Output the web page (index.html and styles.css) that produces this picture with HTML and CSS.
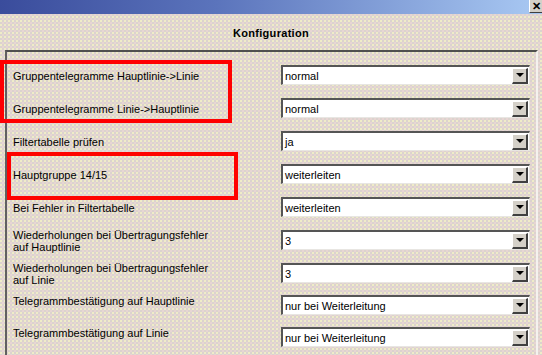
FILE: index.html
```html
<!DOCTYPE html>
<html>
<head>
<meta charset="utf-8">
<link rel="stylesheet" href="styles.css">
</head>
<body>
<div class="window">
  <div class="titlebar">
    <div class="close">&#x2715;</div>
  </div>
  <div class="heading">Konfiguration</div>
  <div class="panel">
    <div class="row">
      <div class="label">Gruppentelegramme Hauptlinie-&gt;Linie</div>
      <div class="select"><span class="value">normal</span><span class="arrow"></span></div>
    </div>
    <div class="row">
      <div class="label">Gruppentelegramme Linie-&gt;Hauptlinie</div>
      <div class="select"><span class="value">normal</span><span class="arrow"></span></div>
    </div>
    <div class="row">
      <div class="label">Filtertabelle prüfen</div>
      <div class="select"><span class="value">ja</span><span class="arrow"></span></div>
    </div>
    <div class="row">
      <div class="label">Hauptgruppe 14/15</div>
      <div class="select"><span class="value">weiterleiten</span><span class="arrow"></span></div>
    </div>
    <div class="row">
      <div class="label">Bei Fehler in Filtertabelle</div>
      <div class="select"><span class="value">weiterleiten</span><span class="arrow"></span></div>
    </div>
    <div class="row">
      <div class="label">Wiederholungen bei Übertragungsfehler<br>auf Hauptlinie</div>
      <div class="select"><span class="value">3</span><span class="arrow"></span></div>
    </div>
    <div class="row short">
      <div class="label">Wiederholungen bei Übertragungsfehler<br>auf Linie</div>
      <div class="select"><span class="value">3</span><span class="arrow"></span></div>
    </div>
    <div class="row short">
      <div class="label raised">Telegrammbestätigung auf Hauptlinie</div>
      <div class="select"><span class="value">nur bei Weiterleitung</span><span class="arrow"></span></div>
    </div>
    <div class="row short">
      <div class="label raised">Telegrammbestätigung auf Linie</div>
      <div class="select"><span class="value">nur bei Weiterleitung</span><span class="arrow"></span></div>
    </div>
  </div>
  <div class="mark mark-a"></div>
  <div class="mark mark-b"></div>
</div>
</body>
</html>
```
FILE: styles.css
```css
html, body {
  margin: 0;
  padding: 0;
}
body {
  width: 542px;
  height: 355px;
  overflow: hidden;
  font-family: "Liberation Sans", Arial, sans-serif;
  font-size: 11px;
  color: #000;
}
.window {
  position: relative;
  width: 542px;
  height: 355px;
  background-color: #dbd3ce;
  background-image:
    radial-gradient(circle at 1px 1px, #f0edc8 0.7px, transparent 0.9px),
    radial-gradient(circle at 3px 3px, #e8d6d4 0.7px, transparent 0.9px);
  background-size: 4px 4px, 4px 4px;
  overflow: hidden;
}
.titlebar {
  height: 14px;
  background: linear-gradient(90deg, #3a4c9c 0%, #5b74bc 40%, #a9c9f3 100%);
  display: flex;
  justify-content: flex-end;
}
.close {
  width: 12px;
  height: 12px;
  background: #d4d0c8;
  border-bottom: 1px solid #404040;
  border-left: 1px solid #fff;
  font-size: 11px;
  font-weight: bold;
  line-height: 12px;
  text-align: center;
  color: #000;
}
.heading {
  height: 36px;
  display: flex;
  align-items: center;
  justify-content: center;
  font-weight: bold;
  font-size: 11px;
  letter-spacing: 0.3px;
  padding-top: 1px;
  box-sizing: border-box;
}
.panel {
  margin-left: 5px;
  width: 533px;
  box-sizing: border-box;
  border-top: 2px solid #505050;
  border-left: 2px solid #606060;
  border-right: 2px solid #f4f2ee;
  padding-top: 13px;
  display: flex;
  flex-direction: column;
}
.row {
  height: 33px;
  display: flex;
  align-items: flex-start;
}
.row.short {
  height: 32px;
}
.label {
  width: 274px;
  padding-left: 6px;
  height: 20px;
  display: flex;
  align-items: center;
  line-height: 12px;
  padding-top: 2px;
  box-sizing: border-box;
  white-space: nowrap;
}
.label.raised {
  padding-top: 0;
  height: 12px;
}
.select {
  width: 249px;
  height: 20px;
  box-sizing: border-box;
  background: #fff;
  border-top: 2px solid #555;
  border-left: 2px solid #555;
  border-right: 1px solid #e8e6e2;
  border-bottom: 1px solid #e8e6e2;
  display: flex;
  align-items: center;
}
.value {
  flex: 1;
  padding-left: 2px;
  line-height: 14px;
}
.arrow {
  width: 16px;
  height: 16px;
  box-sizing: border-box;
  margin-right: 1px;
  background: #d4d0c8;
  border-top: 1px solid #fff;
  border-left: 1px solid #fff;
  border-right: 2px solid #404040;
  border-bottom: 2px solid #404040;
  display: flex;
  align-items: center;
  justify-content: center;
}
.arrow::after {
  content: "";
  width: 0;
  height: 0;
  border-left: 4px solid transparent;
  border-right: 4px solid transparent;
  border-top: 4px solid #000;
}
.mark {
  position: absolute;
  border: 4px solid #ff0000;
  box-sizing: border-box;
}
.mark-a {
  left: 0;
  top: 60px;
  width: 232px;
  height: 63px;
}
.mark-b {
  left: 7px;
  top: 152px;
  width: 231px;
  height: 48px;
}
```
